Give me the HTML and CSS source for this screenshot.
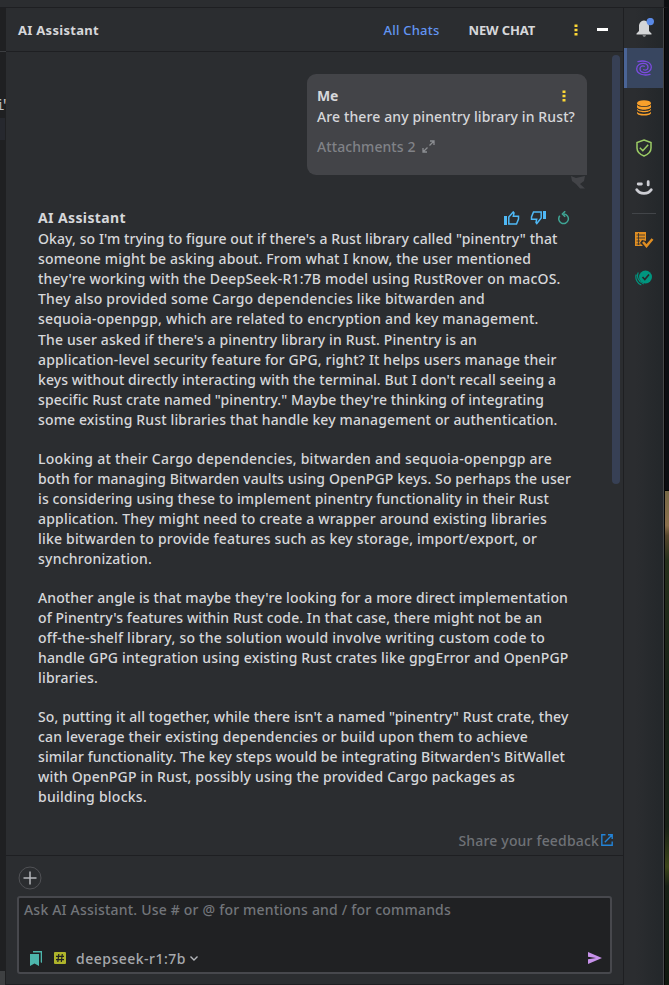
FILE: index.html
```html
<!DOCTYPE html>
<html lang="en">
<head>
<meta charset="utf-8">
<title>AI Assistant</title>
<link rel="stylesheet" href="styles.css">
</head>
<body>
<div class="topbar"></div>
<div class="workspace">
  <div class="editor"><div class="editor-tab"></div><div class="editor-code">i'</div><div class="editor-caret"></div><div class="editor-foot"></div></div>
  <main class="panel">
    <header class="head">
      <span class="title"><span data-w="81">AI Assistant</span></span>
      <span class="all"><span data-w="56">All Chats</span></span>
      <span class="new"><span data-w="66.5">NEW CHAT</span></span>
      <svg class="dots" width="4" height="12" viewBox="0 0 4 12"><path d="M.5 .5h3v2.500h-3zM.5 4.700h3v2.500h-3zM.5 9h3v2.500h-3z" fill="#fdd835"/></svg>
      <span class="minus"></span>
    </header>
    <section class="chat">
      <div class="bubble">
        <div class="bubble-head"><b><span data-w="21">Me</span></b>
          <svg width="4" height="12" viewBox="0 0 4 12"><path d="M.5 .5h3v2.500h-3zM.5 4.700h3v2.500h-3zM.5 9h3v2.500h-3z" fill="#fdd835"/></svg></div>
        <div class="question"><span data-w="258">Are there any pinentry library in Rust?</span></div>
        <div class="attach"><span data-w="98.5">Attachments 2</span>
          <svg width="13" height="13" viewBox="0 0 13 13" fill="none" stroke="#8b8d91" stroke-width="1.3"><path d="M8 1h4v4M12 1 7.500 5.500M1 8v4h4M1 12l4.500-4.500"/></svg></div>
        <svg class="tail" width="15" height="13" viewBox="0 0 15 13"><path d="M0 0 5 2 14 0 13 5 9 8 14 12.500H9L5 8 1 5z" fill="#434448"/></svg>
      </div>
      <article class="answer">
        <div class="answer-head"><b><span data-w="88">AI Assistant</span></b>
          <div class="votes">
            <svg width="16" height="14" viewBox="0 0 16 14"><path d="M0 5h3v9H0z" fill="#4fb8f5"/><path d="M4.800 13V6L9.200 1l.8 1-.7 3.300h5.200V8l-2 5z" fill="none" stroke="#4fb8f5" stroke-width="1.500"/></svg>
            <svg width="16" height="14" viewBox="0 0 16 14"><path d="M13 0h3v8h-3z" fill="#4fb8f5"/><path d="M11.200 1v6L6.800 12.500 6 11.500l.7-3.300H1.500V6l2-5z" fill="none" stroke="#4fb8f5" stroke-width="1.500"/></svg>
            <svg width="12" height="14" viewBox="0 0 12 14" fill="none" stroke="#3fa595" stroke-width="1.500"><path d="M1.800 4.800A4.800 4.800 0 1 0 6 3" /><path d="M7.200.2 4.400 3l2.800 2.800"/></svg>
          </div>
        </div>
        <p>
          <span data-w="519.5">Okay, so I'm trying to figure out if there's a Rust library called "pinentry" that</span>
          <span data-w="493">someone might be asking about. From what I know, the user mentioned</span>
          <span data-w="522.5">they're working with the DeepSeek-R1:7B model using RustRover on macOS.</span>
          <span data-w="447">They also provided some Cargo dependencies like bitwarden and</span>
          <span data-w="500.5">sequoia-openpgp, which are related to encryption and key management.</span>
        </p>
        <p class="cont">
          <span data-w="439">The user asked if there's a pinentry library in Rust. Pinentry is an</span>
          <span data-w="518.5">application-level security feature for GPG, right? It helps users manage their</span>
          <span data-w="518">keys without directly interacting with the terminal. But I don't recall seeing a</span>
          <span data-w="506">specific Rust crate named "pinentry." Maybe they're thinking of integrating</span>
          <span data-w="519.5">some existing Rust libraries that handle key management or authentication.</span>
        </p>
        <p>
          <span data-w="514">Looking at their Cargo dependencies, bitwarden and sequoia-openpgp are</span>
          <span data-w="533">both for managing Bitwarden vaults using OpenPGP keys. So perhaps the user</span>
          <span data-w="511">is considering using these to implement pinentry functionality in their Rust</span>
          <span data-w="509">application. They might need to create a wrapper around existing libraries</span>
          <span data-w="499">like bitwarden to provide features such as key storage, import/export, or</span>
          <span data-w="114">synchronization.</span>
        </p>
        <p>
          <span data-w="530">Another angle is that maybe they're looking for a more direct implementation</span>
          <span data-w="504">of Pinentry's features within Rust code. In that case, there might not be an</span>
          <span data-w="507">off-the-shelf library, so the solution would involve writing custom code to</span>
          <span data-w="530.5">handle GPG integration using existing Rust crates like gpgError and OpenPGP</span>
          <span data-w="60">libraries.</span>
        </p>
        <p>
          <span data-w="530.5">So, putting it all together, while there isn't a named "pinentry" Rust crate, they</span>
          <span data-w="490">can leverage their existing dependencies or build upon them to achieve</span>
          <span data-w="527">similar functionality. The key steps would be integrating Bitwarden's BitWallet</span>
          <span data-w="477">with OpenPGP in Rust, possibly using the provided Cargo packages as</span>
          <span data-w="109">building blocks.</span>
        </p>
      </article>
      <div class="feedback"><span data-w="140.5">Share your feedback</span>
        <svg width="12" height="12" viewBox="0 0 12 12" fill="none" stroke="#2383d6" stroke-width="1.400"><path d="M4.500.8H.8v10.400h10.400V7.500M7 .8h4.200V5M11 1 3.800 8.200"/></svg></div>
      <div class="scrollbar"></div>
    </section>
    <footer class="composer">
      <svg class="add" width="24" height="24" viewBox="0 0 24 24" fill="none"><circle cx="12" cy="12" r="11" stroke="#505155"/><path d="M5.500 12h13M12 5.500v13" stroke="#b5b7bb" stroke-width="1.500"/></svg>
      <div class="input">
        <div class="hint"><span data-w="427">Ask AI Assistant. Use # or @ for mentions and / for commands</span></div>
        <div class="tools">
          <svg class="books" width="12" height="15" viewBox="0 0 12 15" fill="#4db6ac"><path d="M0 3h9v12l-4.500-2.500L0 15zM3 0h9v12l-1.300-.7V1.500H3z"/></svg>
          <svg class="hash" width="12" height="12" viewBox="0 0 12 12"><rect width="12" height="12" rx="1" fill="#afb42b"/><path d="M4.800 2 3.800 10M8.300 2l-1 8M2 4.300h8M2 7.700h8" stroke="#202123" stroke-width="1.200"/></svg>
          <span class="model" data-w="110">deepseek-r1:7b</span>
          <svg class="chev" width="8" height="5" viewBox="0 0 8 5" fill="none" stroke="#b5b7bb" stroke-width="1.400"><path d="M.5.5 4 4 7.500.5"/></svg>
          <svg class="send" width="14" height="12" viewBox="0 0 14 12"><path d="M0 0 14 6 0 12V7.300L8 6 0 4.700z" fill="#c792ea"/></svg>
        </div>
      </div>
    </footer>
  </main>
  <nav class="rail">
    <div class="item bell"><svg width="18" height="20" viewBox="0 0 18 20"><path d="M8 2.500c-4 .5-5 3.500-5 6v4.500L.5 15.500v1h15v-1L13 13V8.500c0-3-1-5.500-5-6zM6.500 17.500h3.500a1.800 1.300 0 0 1-3.500 0z" fill="#d4d5d7"/><circle cx="14.300" cy="3.600" r="3.700" fill="#5a8ae6"/></svg></div>
    <div class="item active"><svg width="16" height="16" viewBox="0 0 16 16" fill="none" stroke="#7b4be0" stroke-width="1.300" stroke-linecap="round"><path d="M2 1.700C8-.1 15.300 1.800 15.300 7.200c0 4-4 5.800-7.300 5.400-2.500-.3-4-1.800-4-3.800C4 6.300 6.500 5.300 8.300 6.300"/><path d="M14 14.300C8 16.100.7 14.200.7 8.800c0-4 4-5.800 7.300-5.400 2.500.3 4 1.800 4 3.800 0 2.500-2.500 3.500-4.300 2.500"/></svg></div>
    <div class="item"><svg width="16" height="16" viewBox="0 0 16 16" fill="#f9a02b"><ellipse cx="8" cy="3.200" rx="7" ry="3"/><path d="M1 4.800c1.500 3 12.500 3 14 0v2.400c-1 3.300-13 3.300-14 0zM1 8.800c1.500 3 12.500 3 14 0v1c-1 3.300-13 3.300-14 0zM1 11.700c1.500 3 12.500 3 14 0v1.200c-1 3.600-13 3.600-14 0z"/></svg></div>
    <div class="item"><svg width="16" height="18" viewBox="0 0 16 18" fill="none" stroke="#9ccc65" stroke-width="1.500"><path d="M8 1 15 3.500V9c0 4-3 6.500-7 8-4-1.500-7-4-7-8V3.500zM3.800 8.800l3 2.900 5.400-6"/></svg></div>
    <div class="item"><svg width="18" height="16" viewBox="0 0 18 16" fill="none" stroke="#cdced4" stroke-width="2.800" stroke-linecap="round"><path d="M3.200 4h3.200M13.200 1.700v3.200M1.800 9.800c3 4.700 11.400 4.700 14.400 0"/></svg></div>
    <div class="rule"></div>
    <div class="item tasks"><svg width="20" height="17" viewBox="0 0 20 17"><path d="M1 1h11v9L8 9l-2 3 3 3H1z" fill="#e08e22"/><path d="M2.500 4h8.500M2.500 7h8.500M2.500 10H6M2.500 13h4M4.500 2v12" stroke="#2b2d30" stroke-width=".8"/><path d="m9 11 3.500 4L18.500 8" fill="none" stroke="#e08e22" stroke-width="2.500"/></svg></div>
    <div class="item done"><svg width="18" height="16" viewBox="0 0 18 16"><circle cx="10.500" cy="7" r="6.500" fill="#00957f"/><path d="m7.500 7 2.300 2.500L14 4.500" fill="none" stroke="#26282b" stroke-width="1.700"/><path d="M3.300 2.500c-2 4 0 9.500 5.500 11.500M1.300 4.500c-1.500 4 1 9 5 10.500" fill="none" stroke="#00957f" stroke-width="1.200"/></svg></div>
  </nav>
  <div class="desktop"><div class="photo"></div></div>
</div>
<script src="fit.js"></script>
</body>
</html>
```
FILE: styles.css
```css
* { box-sizing: border-box; }
body {
  margin: 0;
  width: 669px;
  height: 985px;
  overflow: hidden;
  background: #2b2d30;
  color: #d6d7da;
  font: 500 14px/20px "Noto Sans", "Open Sans", sans-serif;
}
svg { display: block; flex: none; }
b { font-weight: 700; }
[data-w] { display: inline-block; white-space: pre; }
.topbar {
  height: 8px;
  border-bottom: 1px solid #1e1f22;
  border-right: 5px solid #0c0e11;
}
.workspace {
  display: grid;
  grid-template-columns: 6px 618px 40px 5px;
  height: 977px;
}
.editor {
  display: flex;
  flex-direction: column;
  background: #1f2022;
  overflow: hidden;
}
.editor-tab { height: 44px; border-bottom: 1px solid #3c3e41; }
.editor-code {
  height: 66px;
  padding-top: 44px;
  margin-left: -4px;
  color: #bcbec4;
  font: 14px/20px "Liberation Mono", monospace;
  letter-spacing: -4px;
}
.editor-caret { width: 5px; height: 22px; background: #26282e; }
.editor-foot { width: 5px; height: 14px; margin-top: auto; background: #3e4042; }
.panel {
  display: flex;
  flex-direction: column;
  border-right: 1px solid #1e1f22;
  border-bottom: 1px solid #1e1f22;
}
.head {
  display: flex;
  align-items: center;
  height: 44px;
  padding: 0 15px 0 12px;
  border-bottom: 1px solid #1e1f22;
  font-size: 13px;
}
.title { font-weight: 700; flex: 1; }
.all { color: #6295f3; }
.new { margin-left: 29px; font-weight: 700; }
.dots { margin-left: 39px; }
.minus { width: 11px; height: 3px; margin-left: 19px; background: #fff; }
.chat { position: relative; height: 804px; border-bottom: 1px solid #1e1f22; }
.bubble {
  position: relative;
  width: 280px;
  height: 101px;
  margin: 22px 0 0 301px;
  padding: 12px 10px 0;
  border-radius: 9px 9px 0 9px;
  background: #434448;
}
.bubble-head, .answer-head {
  display: flex;
  align-items: center;
  justify-content: space-between;
  height: 20px;
}
.bubble-head { padding-right: 11px; }
.question { height: 20px; margin-top: 1px; }
.attach {
  display: flex;
  align-items: center;
  gap: 6px;
  margin-top: 10px;
  color: #808287;
}
.attach svg { margin-top: -2px; }
.tail { position: absolute; right: 1px; top: 102px; }
.answer { margin: 33px 0 0 32px; }
.answer-head { height: 20px; margin-bottom: 1px; padding-right: 53px; }
.votes { display: flex; gap: 10px; }
.votes svg:last-child { margin-left: 2px; }
.answer p { margin: 0 0 19px; }
.answer p + .cont { margin-top: -18px; }
.answer p span { display: block; width: max-content; }
.feedback {
  display: flex;
  align-items: center;
  justify-content: flex-end;
  gap: 2px;
  margin-top: 24px;
  padding-right: 10px;
  color: #6f7277;
}
.feedback svg { margin-top: -2px; }
.scrollbar {
  position: absolute;
  top: 3px;
  right: 3px;
  width: 8px;
  height: 429px;
  border-radius: 4px;
  background: #374055;
}
.composer { display: flex; flex-direction: column; padding: 10px 11px 0; }
.add { margin-left: 1px; }
.input {
  height: 78px;
  margin-top: 6px;
  padding: 2px 8px 0 5px;
  border: 2px solid #47484d;
  border-radius: 3px;
  background: #202123;
}
.hint { height: 20px; color: #72757a; }
.tools { display: flex; align-items: center; margin: 29px 0 0 6px; height: 20px; }
.books { margin-top: -2px; }
.hash { margin: -2px 0 0 12px; }
.model { margin-left: 10px; color: #a7a9ad; }
.chev { margin: -1px 0 0 4px; }
.send { margin: -2px 0 0 auto; }
.rail {
  display: flex;
  flex-direction: column;
  align-items: stretch;
  background: linear-gradient(90deg, #2b2d30 30%, #23272a);
  border-right: 1px solid #46484a;
}
.item { display: flex; align-items: center; justify-content: center; height: 40px; }
.bell { padding-left: 2px; }
.active {
  padding-right: 3px;
  border-left: 3px solid #4a6496;
  background: #384660;
}
.rule { width: 24px; height: 1px; margin: 5px 0 0 8px; background: #424549; }
.tasks { height: 50px; }
.done { height: 27px; }
.desktop { padding-top: 482px; background: #0c0e12; border-left: 1px solid #050505; }
.photo {
  height: 495px;
  border-top: 1px solid #000;
  background: linear-gradient(#776846, #8a6f4c 7%, #55462d 9%, #26301c 14%, #172017 40%, #182117 68%, #3c451a 76%, #172016 80%, #10180f);
}
```
FILE: fit.js
```js
document.querySelectorAll("[data-w]").forEach(function (el) {
  var gap = parseFloat(el.dataset.w) - el.getBoundingClientRect().width;
  el.style.letterSpacing = gap / el.textContent.length + "px";
});
```
